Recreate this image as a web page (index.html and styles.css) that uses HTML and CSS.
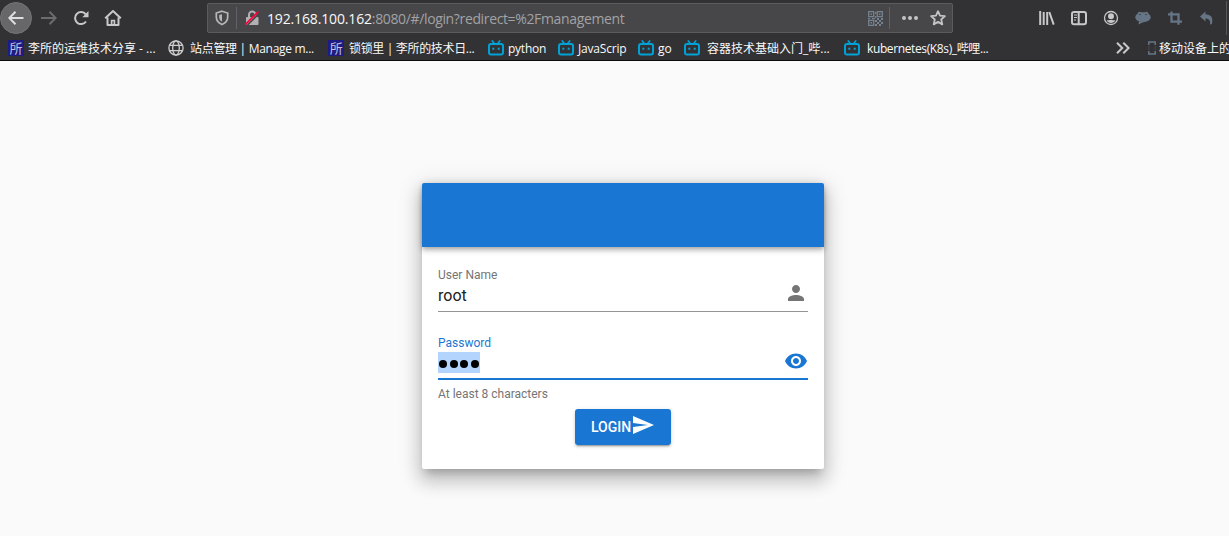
FILE: index.html
```
<!DOCTYPE html>
<html lang="zh-CN">
<head>
<meta charset="utf-8">
<title>Login</title>
<link rel="stylesheet" href="styles.css">
</head>
<body>
<svg class="defs" width="0" height="0">
  <symbol id="tv" viewBox="0 0 16 16"><path d="M4.300 1l2 2.500M11.700 1l-2 2.500" stroke="#00a1d6" stroke-width="1.700" stroke-linecap="round"/><rect x="1" y="4" width="14" height="10.600" rx="2" fill="none" stroke="#00a1d6" stroke-width="2"/><path d="M5.300 7.800v2M10.700 7.800v2" stroke="#00a1d6" stroke-width="2"/></symbol>
</svg>
<header class="chrome">
  <div class="toolbar">
    <nav class="nav">
      <span class="back"><svg width="16" height="16" viewBox="0 0 16 16" class="line"><path d="M15.500 8H1.500M7.500 1.800L1.300 8l6.200 6.200"/></svg></span>
      <svg width="16" height="16" viewBox="0 0 16 16" class="line dim"><path d="M0 8h14.500M8.500 1.800L14.700 8l-6.200 6.200"/></svg>
      <svg width="16" height="16" viewBox="0 0 16 16" class="line"><path d="M13 11.500A6 6 0 1 1 12.800 4.400"/><path d="M15.500 1v6.200H9.300z" fill="#c8c8c9" stroke="none"/></svg>
      <svg width="18" height="16" viewBox="0 0 18 16" class="line"><path d="M1.200 8.300L9 1l7.800 7.300M3.500 7.500V15h11V7.500" stroke-linejoin="round"/><path d="M7.600 15v-4.500h2.800V15" stroke-width="1.700"/></svg>
    </nav>
    <div class="urlbar">
      <svg class="shield" width="14" height="16" viewBox="0 0 14 16"><path d="M7 1.200L12.700 3v4c0 3.500-2.200 6-5.700 7.600C3.500 13 1.300 10.500 1.300 7V3z" fill="none" stroke="#b7b7b9" stroke-width="1.700"/><path d="M7 4.200v7.600C5 10.500 4.200 9 4.200 7V5z" fill="#b7b7b9"/></svg>
      <i class="sep"></i>
      <svg class="lock" width="16" height="16" viewBox="0 0 16 16"><path d="M5 7V4.800a3.200 3.200 0 0 1 6.400 0V7" fill="none" stroke="#b1b1b3" stroke-width="2"/><rect x="2" y="7" width="12.500" height="8" rx="1" fill="#b1b1b3"/><path d="M2.800 15.800L15.800 2.800" stroke="#474749" stroke-width="1.500"/><path d="M1.200 14.700L14.300 1.600" stroke="#ff0039" stroke-width="1.800"/></svg>
      <span class="url"><b>192.168.100.162</b>:8080/#/login?redirect=%2Fmanagement</span>
      <svg class="qr" width="15" height="15" viewBox="0 0 15 15"><path fill="none" stroke="#748291" stroke-width="1.300" d="M.7.7h5v5h-5zM9.300.7h5v5h-5zM.7 9.300h5v5h-5z"/><path fill="#748291" d="M2.500 2.500h1.500v1.500H2.500zM11 2.500h1.500v1.500H11zM2.500 11h1.500v1.500H2.500zM7 1h1.300v2H7zM7 5h1.300v2H7zM0 7h2v1.300H0zM4 7h3v1.300H4zM9 7h2v2H9zM13 7h2v2h-2zM7 9h2v2H7zM11 9h2v2h-2zM9 11h2v2H9zM13 11h2v2h-2zM7 13h2v2H7zM11 13h2v2h-2z"/></svg>
      <i class="sep"></i>
      <svg class="dots" width="16" height="4" viewBox="0 0 16 4" fill="#c4c4c5"><circle cx="2" cy="2" r="2"/><circle cx="8" cy="2" r="2"/><circle cx="14" cy="2" r="2"/></svg>
      <svg class="star" width="16" height="16" viewBox="0 0 16 16"><path d="M8 1.200l2 4.500 4.900.5-3.700 3.300 1.100 4.900L8 11.900l-4.300 2.500 1.100-4.900L1.100 6.200 6 5.700z" fill="none" stroke="#c4c4c5" stroke-width="1.800" stroke-linejoin="round"/></svg>
    </div>
    <div class="tools">
      <svg width="16" height="16" viewBox="0 0 16 16" class="line"><path d="M1.200 1v14M4.700 2v13M8.200 2v13M10.300 2l4.400 12.700"/></svg>
      <svg width="16" height="16" viewBox="0 0 16 16" class="line"><rect x="1" y="2" width="14" height="12.300" rx="2"/><path d="M7.700 2v12"/><path d="M3 5h3M3 7.500h3M3 10h2" stroke-width="1"/></svg>
      <svg width="16" height="16" viewBox="0 0 16 16"><circle cx="8" cy="8" r="6.500" fill="none" stroke="#c8c8c9" stroke-width="1.300"/><circle cx="8" cy="6.200" r="3" fill="#c8c8c9"/><path d="M3.700 10.300c2 .2 2-.3 4.300-.3s2.300.5 4.300.3C11.500 12.300 10 13 8 13s-3.500-.7-4.300-2.700z" fill="#c8c8c9"/></svg>
      <svg width="16" height="16" viewBox="0 0 16 16" fill="#667585"><ellipse cx="8" cy="7.300" rx="7.700" ry="5"/><circle cx="4.800" cy="4" r="2.200"/><circle cx="11.200" cy="4" r="2.200"/><path d="M4 11l-.5 3.500L8.500 12z"/><circle cx="5" cy="4.500" r=".7" fill="#323234"/><circle cx="11" cy="4.500" r=".7" fill="#323234"/></svg>
      <svg width="16" height="16" viewBox="0 0 16 16"><path d="M4.500 1.500V11.700H15M1 4.300h10.500v10.500" fill="none" stroke="#667585" stroke-width="2.300"/></svg>
      <svg width="16" height="16" viewBox="0 0 16 16"><path d="M1 6.500L6.500 1.500v3C11.500 4.500 14.500 7 13 13.700l-2 1.100c.8-4-.8-6.300-4.500-6.300v3z" fill="#667585"/></svg>
    </div>
    <i class="edge"></i>
  </div>
  <div class="bookmarks">
    <div class="bm w1"><span class="fav">所</span><span class="t">李所的运维技术分享 - ...</span></div>
    <div class="bm w2"><svg width="16" height="16" viewBox="0 0 16 16" fill="none" stroke="#cfcfd0" stroke-width="1.300"><circle cx="8" cy="8" r="7.100"/><ellipse cx="8" cy="8" rx="3.300" ry="7.100"/><path d="M1.500 5.300h13M1.500 10.700h13"/></svg><span class="t">站点管理 | Manage m...</span></div>
    <div class="bm w3"><span class="fav">所</span><span class="t">锁锁里 | 李所的技术日...</span></div>
    <div class="bm w4"><svg width="16" height="16"><use href="#tv"/></svg><span class="t">python</span></div>
    <div class="bm w5"><svg width="16" height="16"><use href="#tv"/></svg><span class="t">JavaScrip</span></div>
    <div class="bm w6"><svg width="16" height="16"><use href="#tv"/></svg><span class="t">go</span></div>
    <div class="bm w7"><svg width="16" height="16"><use href="#tv"/></svg><span class="t">容器技术基础入门_哔...</span></div>
    <div class="bm w8"><svg width="16" height="16"><use href="#tv"/></svg><span class="t">kubernetes(K8s)_哔哩...</span></div>
    <svg class="more line" width="14" height="12" viewBox="0 0 14 12"><path d="M1 .7L6.300 6 1 11.300M7.300.7L12.600 6l-5.300 5.300"/></svg>
    <div class="bm w9"><svg width="8" height="14" viewBox="0 0 8 14" fill="none" stroke="#667585" stroke-width="1.500"><path d="M.8 4V1H7.200V4M.8 10v3H7.200V10"/><path d="M.8 5.500v3M7.200 5.500v3" stroke-width=".8" stroke-dasharray="1 1"/></svg><span class="t">移动设备上的</span></div>
  </div>
</header>
<main class="page">
  <form class="card">
    <div class="card-bar"></div>
    <div class="fields">
      <div class="field">
        <div class="label">User Name</div>
        <div class="row"><span class="value">root</span><svg width="24" height="24" viewBox="0 0 24 24" fill="#757575"><path d="M12 12c2.210 0 4-1.790 4-4s-1.790-4-4-4-4 1.790-4 4 1.790 4 4 4zm0 2c-2.670 0-8 1.340-8 4v2h16v-2c0-2.660-5.330-4-8-4z"/></svg></div>
      </div>
      <div class="field active">
        <div class="label">Password</div>
        <div class="row"><span class="mask"><i></i><i></i><i></i><i></i></span><svg width="24" height="24" viewBox="0 0 24 24" fill="#1976d2"><path d="M12 4.500C7 4.500 2.730 7.610 1 12c1.730 4.390 6 7.500 11 7.500s9.270-3.110 11-7.500c-1.730-4.390-6-7.500-11-7.500zM12 17c-2.760 0-5-2.240-5-5s2.240-5 5-5 5 2.240 5 5-2.240 5-5 5zm0-8c-1.660 0-3 1.340-3 3s1.340 3 3 3 3-1.340 3-3-1.340-3-3-3z"/></svg></div>
      </div>
      <div class="hint">At least 8 characters</div>
    </div>
    <div class="login"><span>LOGIN</span><svg width="24" height="24" viewBox="0 0 24 24" fill="#fff"><path d="M2.010 21L23 12 2.010 3 2 10l15 2-15 2z"/></svg></div>
  </form>
</main>
</body>
</html>
```

FILE: styles.css
```
* { box-sizing: border-box; }
body { margin: 0; width: 1229px; height: 536px; overflow: hidden; background: #fafafa; font-family: Roboto, "Liberation Sans", sans-serif; }
svg { display: block; flex: none; }
.defs { position: absolute; }
.line { fill: none; stroke: #c8c8c9; stroke-width: 2; }
.line.dim { stroke: #6c6c6e; }

/* Browser chrome */
.chrome { height: 61px; background: #323234; border-bottom: 1px solid #0c0c0d; font-family: "Open Sans", "Noto Sans CJK SC", sans-serif; color: #f9f9fa; }
.toolbar { display: flex; align-items: center; height: 36px; }
.nav { display: flex; align-items: center; flex: none; width: 207px; }
.back { display: flex; align-items: center; justify-content: center; width: 32px; height: 32px; border-radius: 50%; background: #676769; border: 1px solid #747476; margin-right: 9px; }
.back .line { stroke: #dededf; }
.nav > svg { margin-right: 16px; }
.nav > svg:nth-child(3) { margin-right: 15px; }
.urlbar { display: flex; align-items: center; flex: none; width: 746px; height: 30px; background: #474749; border: 1px solid #5c5c5e; border-radius: 2px; padding-left: 7px; }
.sep { width: 1px; height: 22px; background: #626368; flex: none; }
.shield { margin-right: 7px; }
.lock { margin: 0 7px; }
.url { flex: none; width: 601px; padding-top: 2px; font-size: 14px; line-height: 28px; letter-spacing: -.36px; white-space: nowrap; color: #a2a2a4; }
.url b { font-weight: 400; letter-spacing: -.15px; color: #f9f9fa; }
.qr { margin-right: 6px; }
.dots { margin: 0 12px; }
.tools { display: flex; flex: none; gap: 16px; margin-left: 86px; }
.edge { flex: none; width: 1px; height: 34px; background: #58585a; margin-left: 11px; }
.bookmarks { display: flex; align-items: center; height: 24px; padding-left: 8px; font-size: 12px; line-height: 20px; white-space: nowrap; }
.bm { display: flex; align-items: center; gap: 4px; flex: none; }
.t { padding-top: 1px; }
.fav { width: 16px; height: 16px; background: #1e1c83; color: #c0c0dc; font: 13px/16px "Noto Sans CJK SC", sans-serif; text-align: center; }
.w1 { width: 160px; }
.w2 { width: 160px; gap: 6px; letter-spacing: -.3px; }
.w3 { width: 160px; gap: 5px; letter-spacing: -.33px; }
.w4 { width: 70px; letter-spacing: -.25px; }
.w5 { width: 80px; letter-spacing: -.2px; }
.w6 { width: 46px; }
.w7 { width: 160px; gap: 7px; }
.w8 { width: 272px; gap: 7px; letter-spacing: -.38px; }
.more { margin-right: 18px; }
.w9 { gap: 3px; }

/* Login card */
.page { padding-top: 122px; }
.card { width: 402px; height: 286px; margin-left: 422px; background: #fff; border-radius: 2px; box-shadow: 0 7px 8px -4px rgba(0,0,0,.2), 0 12px 17px 2px rgba(0,0,0,.14), 0 5px 22px 4px rgba(0,0,0,.12); }
.card-bar { height: 64px; background: #1976d2; border-radius: 2px 2px 0 0; box-shadow: 0 2px 4px -1px rgba(0,0,0,.2), 0 4px 5px rgba(0,0,0,.14), 0 1px 10px rgba(0,0,0,.12); }
.fields { padding: 20px 16px 0; }
.field { height: 45px; border-bottom: 1px solid #949494; }
.field.active { margin-top: 23px; border-bottom: 2px solid #1976d2; }
.label { font-size: 12px; line-height: 16px; color: #757575; }
.active .label { color: #1976d2; }
.row { display: flex; justify-content: space-between; height: 24px; }
.row svg { margin-top: -2px; }
.value { font-size: 16px; line-height: 26px; color: #212121; }
.mask { display: flex; align-items: center; gap: 2.500px; width: 42px; height: 21px; margin-top: 1px; padding: 3px 1px 0; background: #b3d4fc; }
.mask i { width: 8px; height: 8px; border-radius: 50%; background: #000; }
.hint { font-size: 12px; line-height: 14px; margin-top: 7px; color: #757575; }
.login { display: flex; justify-content: center; width: 96px; height: 36px; margin: 8px 0 0 153px; background: #1976d2; color: #fff; border-radius: 3px; font-size: 14px; font-weight: 500; line-height: 36px; box-shadow: 0 3px 1px -2px rgba(0,0,0,.2), 0 2px 2px rgba(0,0,0,.14), 0 1px 5px rgba(0,0,0,.12); }
.login svg { margin-top: 4px; }
```
